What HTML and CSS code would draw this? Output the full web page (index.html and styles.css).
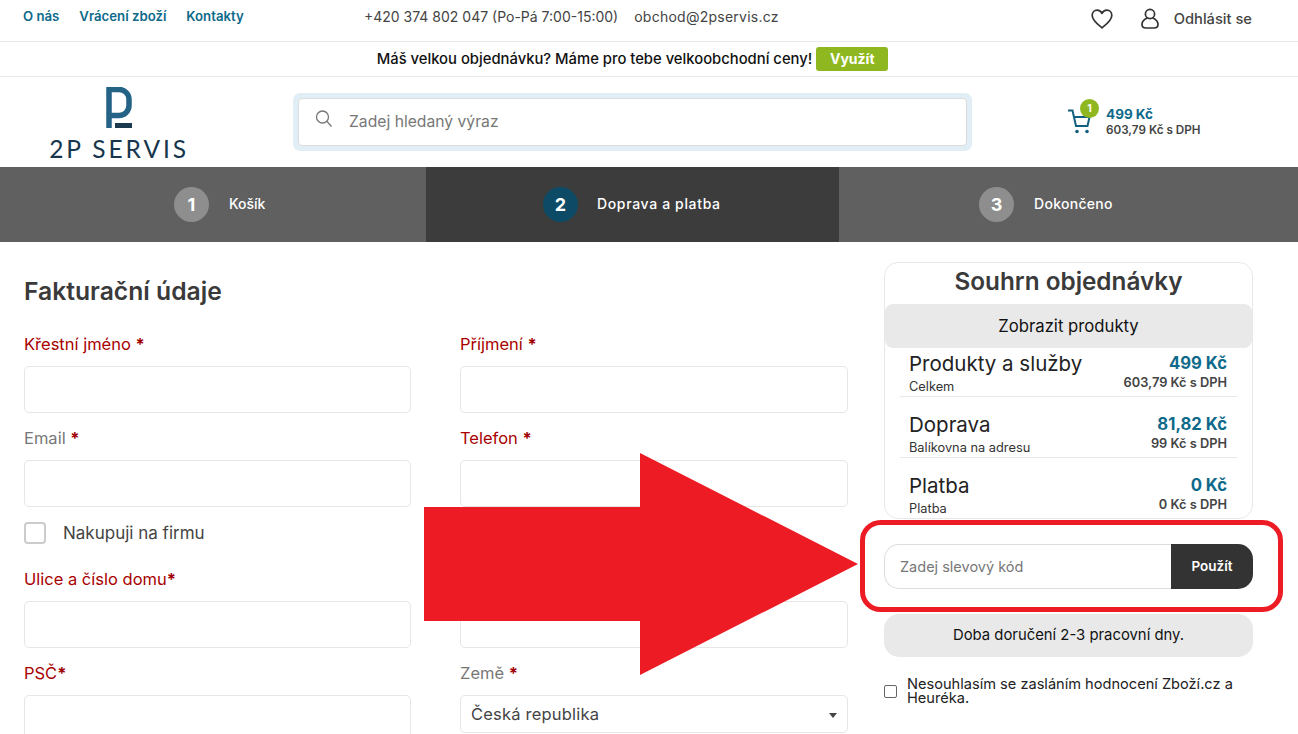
FILE: index.html
```html
<!DOCTYPE html>
<html lang="cs">
<head>
<meta charset="utf-8">
<title>Doprava a platba</title>
<link rel="stylesheet" href="styles.css">
</head>
<body>
<div class="page">
  <div class="topbar">
    <nav class="toplinks"><a>O nás</a><a>Vrácení zboží</a><a>Kontakty</a></nav>
    <div class="contact"><span>+420 374 802 047 (Po-Pá 7:00-15:00)</span><span class="email">obchod@2pservis.cz</span></div>
    <div class="account">
      <svg class="heart" viewBox="0 0 22 20" width="22" height="20"><path d="M11 18.8C6.500 15.200 1.200 11.300 1.200 6.400 1.200 3.400 3.400 1.200 6.100 1.200 8.200 1.200 10 2.300 11 4.400 12 2.300 13.800 1.200 15.900 1.200 18.600 1.200 20.800 3.400 20.800 6.400 20.800 11.300 15.500 15.200 11 18.800Z" fill="none" stroke="#333" stroke-width="1.700" stroke-linejoin="round"/></svg>
      <svg class="user" viewBox="0 0 18 21" width="18" height="21"><circle cx="9" cy="6" r="4.600" fill="none" stroke="#333" stroke-width="1.700"/><path d="M6 10C3 11.500 1 14 1 16.500 1 19 3 20 5 20H13C15 20 17 19 17 16.500 17 14 15 11.500 12 10" fill="none" stroke="#333" stroke-width="1.700" stroke-linecap="round"/></svg>
      <span class="logout">Odhlásit se</span>
    </div>
  </div>
  <div class="promo"><span>Máš velkou objednávku? Máme pro tebe velkoobchodní ceny!</span><a class="promo-btn">Využít</a></div>
  <header class="header">
    <div class="logo">
      <svg viewBox="0 0 26 41" width="26" height="41"><path d="M3 41V2.500H13a10 10 0 0 1 10 10V18.500a10 10 0 0 1-10 10H3" fill="none" stroke="#246286" stroke-width="5.500"/><rect x="9" y="36" width="17" height="5" fill="#1b3a50"/></svg>
      <span class="logo-text">2P SERVIS</span>
    </div>
    <div class="search">
      <div class="search-inner">
        <svg viewBox="0 0 18 18" width="18" height="18"><circle cx="7.500" cy="7" r="6" fill="none" stroke="#777" stroke-width="1.300"/><path d="M12 11.500L16.500 16.500" stroke="#777" stroke-width="1.300"/></svg>
        <span>Zadej hledaný výraz</span>
      </div>
    </div>
    <div class="cart">
      <div class="cart-icon">
        <svg viewBox="0 0 24 26" width="24" height="26"><path d="M0 2.500H4.500L8 18H19.500L21.500 9H5.500" fill="none" stroke="#11607f" stroke-width="2"/><circle cx="9" cy="23.500" r="1.800" fill="#11607f"/><circle cx="19" cy="23.500" r="1.800" fill="#11607f"/></svg>
        <span class="cart-badge">1</span>
      </div>
      <div class="cart-text"><strong>499 Kč</strong><span>603,79 Kč s DPH</span></div>
    </div>
  </header>
  <div class="steps">
    <div class="step step-one"><span class="step-num">1</span><span>Košík</span></div>
    <div class="step step-two"><span class="step-num">2</span><span class="step-label">Doprava a platba</span></div>
    <div class="step step-three"><span class="step-num">3</span><span class="step-label">Dokončeno</span></div>
  </div>
  <main class="main">
    <section class="billing">
      <h1>Fakturační údaje</h1>
      <div class="form-grid">
        <div class="field"><label class="req">Křestní jméno <b>*</b></label><div class="input"></div></div>
        <div class="field"><label class="req">Příjmení <b>*</b></label><div class="input"></div></div>
        <div class="field"><label>Email <b>*</b></label><div class="input"></div></div>
        <div class="field"><label class="req">Telefon <b>*</b></label><div class="input"></div></div>
        <div class="company"><span class="box"></span><span>Nakupuji na firmu</span></div>
        <div class="spacer"></div>
        <div class="field"><label class="req">Ulice a číslo domu<b>*</b></label><div class="input"></div></div>
        <div class="field"><label class="req">Město<b>*</b></label><div class="input"></div></div>
        <div class="field"><label class="req">PSČ<b>*</b></label><div class="input"></div></div>
        <div class="field"><label>Země <b>*</b></label><div class="input select"><span>Česká republika</span><i class="caret"></i></div></div>
      </div>
    </section>
    <aside class="side">
      <div class="summary">
        <h2>Souhrn objednávky</h2>
        <div class="show">Zobrazit produkty</div>
        <div class="row row-first">
          <div class="row-l"><span class="row-t">Produkty a služby</span><span class="row-s">Celkem</span></div>
          <div class="row-r"><strong>499 Kč</strong><span>603,79 Kč s DPH</span></div>
        </div>
        <div class="row">
          <div class="row-l"><span class="row-t">Doprava</span><span class="row-s">Balíkovna na adresu</span></div>
          <div class="row-r"><strong>81,82 Kč</strong><span>99 Kč s DPH</span></div>
        </div>
        <div class="row row-last">
          <div class="row-l"><span class="row-t">Platba</span><span class="row-s">Platba</span></div>
          <div class="row-r"><strong>0 Kč</strong><span>0 Kč s DPH</span></div>
        </div>
      </div>
      <div class="coupon"><div class="coupon-input">Zadej slevový kód</div><div class="coupon-btn">Použít</div></div>
      <div class="delivery">Doba doručení 2-3 pracovní dny.</div>
      <div class="consent"><span class="small-box"></span><span>Nesouhlasím se zasláním hodnocení Zboží.cz a Heuréka.</span></div>
    </aside>
  </main>
  <svg class="overlay" viewBox="0 0 1298 734" width="1298" height="734">
    <path d="M424 507H640V453L858 564 640 675V621H424Z" fill="#ed1c24"/>
    <rect x="862.500" y="522.500" width="418" height="87" rx="18" fill="none" stroke="#ed1c24" stroke-width="5"/>
  </svg>
</div>
</body>
</html>
```
FILE: styles.css
```css
* { box-sizing: border-box; }
html, body { margin: 0; padding: 0; background: #fff; }
body { font-family: Inter, "Noto Sans", sans-serif; color: #333; }
.page { position: relative; width: 1298px; height: 734px; overflow: hidden; }

.topbar { display: flex; align-items: center; height: 42px; border-bottom: 1px solid #e8e8e8; padding-left: 23px; padding-bottom: 9px; }
.toplinks { display: flex; gap: 20px; width: 341px; font-size: 13.200px; font-weight: 600; color: #0e6a8a; }
.contact { display: flex; gap: 16px; font-size: 14px; color: #444; }
.email { letter-spacing: 0.25px; }
.account { display: flex; align-items: center; margin-left: auto; padding-right: 46px; padding-top: 5px; }
.user { margin-left: 28px; }
.logout { margin-left: 15px; font-size: 14.700px; font-weight: 500; color: #444; }

.promo { display: flex; align-items: center; justify-content: center; gap: 4px; height: 35px; border-bottom: 1px solid #e8e8e8; font-size: 14.800px; font-weight: 500; color: #111; padding-right: 33px; }
.promo-btn { display: block; width: 72px; height: 24px; line-height: 24px; background: #8fb820; border-radius: 3px; color: #fff; font-size: 14px; font-weight: 700; text-align: center; }

.header { display: flex; align-items: flex-start; height: 90px; }
.logo { display: flex; flex-direction: column; align-items: center; width: 293px; padding-top: 10px; padding-right: 56px; }
.logo-text { margin-top: 6px; font-family: Lato, sans-serif; font-size: 24.500px; line-height: 30px; letter-spacing: 2.900px; color: #17364d; white-space: nowrap; padding-right: 0; margin-left: 1px; }
.search { width: 679px; height: 58px; margin-top: 16px; padding: 5px; background: #e1eef6; border-radius: 7px; }
.search-inner { display: flex; align-items: center; gap: 16px; height: 100%; padding-left: 16px; padding-bottom: 2px; background: #fff; border: 1px solid #dcdcdc; border-radius: 4px; font-size: 15.700px; color: #777; }
.search-inner svg { margin-top: -4px; }
.cart { display: flex; margin-left: 96px; margin-top: 31px; }
.cart-icon { position: relative; width: 38px; height: 26px; }
.cart-badge { position: absolute; left: 12px; top: -9px; width: 19px; height: 19px; line-height: 19px; border-radius: 50%; background: #8fb820; color: #fff; font-size: 10.500px; font-weight: 700; text-align: center; }
.cart-text { display: flex; flex-direction: column; margin-top: -2px; font-size: 11.700px; font-weight: 600; color: #444; line-height: 15px; }
.cart-text strong { font-size: 13.500px; font-weight: 700; color: #0e6a8a; line-height: 17px; }

.steps { display: grid; grid-template-columns: 426px 413px 459px; height: 75px; padding-bottom: 2px; background: #606060; color: #fff; font-size: 14px; font-weight: 500; }
.step { display: flex; align-items: center; gap: 20px; margin-bottom: -2px; padding-bottom: 2px; }
.step-one { padding-left: 174px; }
.step-two { padding-left: 117px; background: #3c3c3c; gap: 19px; }
.step-two .step-label { letter-spacing: 0.65px; }
.step-three { padding-left: 140px; }
.step-three .step-label { letter-spacing: 0.3px; }
.step-num { display: flex; align-items: center; justify-content: center; width: 35px; height: 35px; margin-top: 2px; border-radius: 50%; background: #8e8e8e; font-size: 18px; font-weight: 700; }
.step-two .step-num { background: #0c4a66; }

.main { display: flex; gap: 36px; padding-left: 24px; }
.billing { width: 824px; }
h1 { margin: 34px 0 0; font-size: 24.700px; line-height: 30px; font-weight: 600; color: #3a3a3a; }
.form-grid { display: grid; grid-template-columns: 387px 388px; column-gap: 49px; margin-top: 28px; }
.field label { display: block; height: 32px; font-size: 16.500px; line-height: 20px; color: #777; }
.field label.req { color: #a80000; }
.field label b { color: #a00000; font-weight: 700; }
.input { height: 47px; margin-bottom: 15px; border: 1px solid #e6e6e6; border-radius: 5px; }
.company { display: flex; align-items: center; gap: 17px; height: 23px; margin-top: -1px; font-size: 17px; color: #444; }
.box { width: 22px; height: 22px; border: 2px solid #ccc; border-radius: 4px; }
.spacer { height: 23px; }
.company, .spacer { margin-bottom: 24px; }
.select { display: flex; align-items: center; justify-content: space-between; height: 38px; padding: 0 10px; font-size: 16.500px; letter-spacing: 0.2px; color: #444; }
.caret { width: 0; height: 0; border-left: 4px solid transparent; border-right: 4px solid transparent; border-top: 5px solid #444; margin-left: auto; margin-top: 2px; }

.side { width: 369px; padding-top: 20px; }
.summary { height: 257px; border: 1px solid #e8e8e8; border-radius: 14px; overflow: hidden; }
h2 { margin: 0; height: 41px; font-size: 24.300px; line-height: 36px; font-weight: 600; text-align: center; color: #3a3a3a; }
.show { height: 44px; line-height: 44px; background: #e9e9e9; border-radius: 8px; font-size: 16.700px; text-align: center; color: #111; }
.row { display: flex; justify-content: space-between; height: 61px; margin: 0 15px; padding: 15px 10px 0 9px; border-bottom: 1px solid #e8e8e8; }
.row-first { height: 49px; padding-top: 3px; }
.row-last { border-bottom: 0; }
.row-l, .row-r { display: flex; flex-direction: column; }
.row-r { align-items: flex-end; }
.row-t { font-size: 20.500px; line-height: 26px; color: #222; }
.row-s { font-size: 12.800px; line-height: 20px; color: #333; }
.row-r strong { font-size: 16.700px; line-height: 24px; font-weight: 700; color: #0e6a8a; }
.row-r span { font-size: 12.800px; line-height: 15px; font-weight: 600; color: #444; }

.coupon { display: flex; height: 45px; margin-top: 25px; }
.coupon-input { flex: 1; line-height: 43px; padding-left: 15px; border: 1px solid #ddd; border-right: 0; border-radius: 15px 0 0 15px; font-size: 14.500px; color: #777; }
.coupon-btn { width: 82px; line-height: 45px; background: #333; border-radius: 0 15px 15px 0; color: #fff; font-size: 13.500px; font-weight: 600; text-align: center; }
.delivery { height: 43px; line-height: 43px; margin-top: 25px; background: #e9e9e9; border-radius: 15px; font-size: 14.850px; text-align: center; color: #111; }
.consent { display: flex; align-items: center; gap: 10px; margin-top: 20px; font-size: 14.600px; line-height: 14px; color: #222; }
.small-box { flex: none; width: 13px; height: 13px; border: 1px solid #666; border-radius: 2px; }

.overlay { position: absolute; left: 0; top: 0; pointer-events: none; }
```
